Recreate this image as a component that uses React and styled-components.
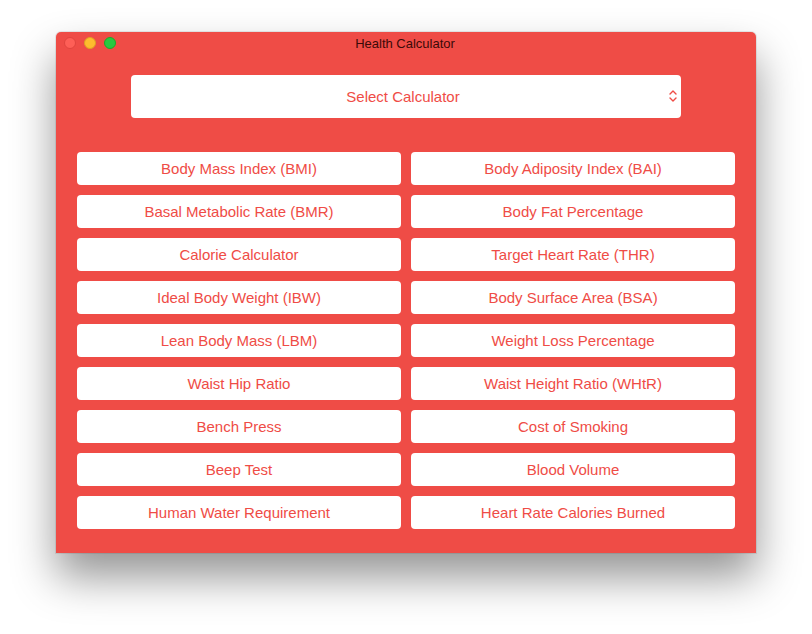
import styled, { createGlobalStyle } from 'styled-components';

const red = '#ef4c46';

const GlobalStyle = createGlobalStyle`
  html, body {
    margin: 0;
    padding: 0;
    background: #ffffff;
  }
  body {
    font-family: "Liberation Sans", Arial, sans-serif;
  }
`;

const calculators = [
  'Body Mass Index (BMI)',
  'Body Adiposity Index (BAI)',
  'Basal Metabolic Rate (BMR)',
  'Body Fat Percentage',
  'Calorie Calculator',
  'Target Heart Rate (THR)',
  'Ideal Body Weight (IBW)',
  'Body Surface Area (BSA)',
  'Lean Body Mass (LBM)',
  'Weight Loss Percentage',
  'Waist Hip Ratio',
  'Waist Height Ratio (WHtR)',
  'Bench Press',
  'Cost of Smoking',
  'Beep Test',
  'Blood Volume',
  'Human Water Requirement',
  'Heart Rate Calories Burned',
];

const Desktop = styled.div`
  width: 812px;
  height: 634px;
  padding-top: 32px;
  box-sizing: border-box;
  display: flex;
  justify-content: center;
  align-items: flex-start;
  overflow: hidden;
`;

const Window = styled.div`
  width: 700px;
  background-color: ${red};
  border-radius: 5px 5px 0 0;
  box-shadow: 0 24px 44px rgba(0, 0, 0, 0.42), 0 0 0 1px rgba(0, 0, 0, 0.08);
  display: flex;
  flex-direction: column;
`;

const TitleBar = styled.div`
  height: 23px;
  display: flex;
  align-items: center;
  justify-content: center;
  position: relative;
`;

const Lights = styled.div`
  position: absolute;
  left: 8px;
  top: 5px;
  display: flex;
  gap: 8px;
`;

const Light = styled.span`
  width: 12px;
  height: 12px;
  border-radius: 50%;
  box-sizing: border-box;
  background-color: ${(props) => props.$color};
  border: 1px solid ${(props) => props.$edge};
`;

const Title = styled.div`
  font-size: 13px;
  color: #3b0a08;
  margin-left: -2px;
`;

const Content = styled.div`
  padding: 20px 21px 24px;
  display: flex;
  flex-direction: column;
  align-items: center;
`;

const SelectBox = styled.div`
  width: 550px;
  height: 43px;
  background: #ffffff;
  border-radius: 4px;
  display: flex;
  align-items: center;
  justify-content: center;
  position: relative;
  color: ${red};
  font-size: 15px;
  margin-bottom: 34px;
  padding-right: 6px;
  box-sizing: border-box;
`;

const Chevron = styled.svg`
  position: absolute;
  right: 3px;
  top: 14px;
`;

const Grid = styled.div`
  width: 100%;
  display: grid;
  grid-template-columns: 1fr 1fr;
  gap: 10px;
`;

const CalcButton = styled.button`
  height: 33px;
  border: none;
  border-radius: 4px;
  background: #ffffff;
  color: ${red};
  font-family: "Liberation Sans", Arial, sans-serif;
  font-size: 15px;
  padding: 0;
  cursor: pointer;
`;

function App() {
  return (
    <>
      <GlobalStyle />
      <Desktop>
        <Window>
          <TitleBar>
            <Lights>
              <Light $color="#fe5f57" $edge="#e1443e" />
              <Light $color="#febc2e" $edge="#dea123" />
              <Light $color="#28c840" $edge="#1aab29" />
            </Lights>
            <Title>Health Calculator</Title>
          </TitleBar>
          <Content>
            <SelectBox>
              Select Calculator
              <Chevron width="10" height="14" viewBox="0 0 10 14">
                <path
                  d="M2 5 L5 2 L8 5 M2 9 L5 12 L8 9"
                  fill="none"
                  stroke={red}
                  strokeWidth="1.4"
                  strokeLinecap="round"
                  strokeLinejoin="round"
                />
              </Chevron>
            </SelectBox>
            <Grid>
              {calculators.map((name) => (
                <CalcButton key={name}>{name}</CalcButton>
              ))}
            </Grid>
          </Content>
        </Window>
      </Desktop>
    </>
  );
}

export default App;
